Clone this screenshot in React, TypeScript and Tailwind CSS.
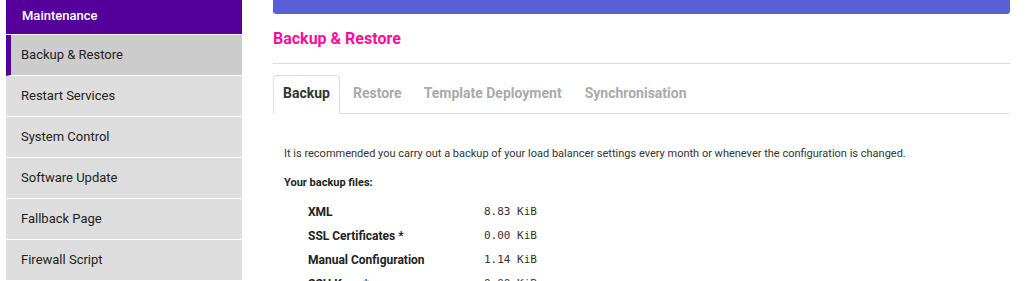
import React from "react";

const items = ["Backup & Restore", "Restart Services", "System Control", "Software Update", "Fallback Page", "Firewall Script"];

const files: [string, string][] = [
  ["XML", "8.83 KiB"],
  ["SSL Certificates *", "0.00 KiB"],
  ["Manual Configuration", "1.14 KiB"],
  ["SSH Keys *", "0.00 KiB"],
];

export default function App() {
  return (
    <div className="flex h-[281px] w-[1033px] overflow-hidden bg-white items-start" style={{ fontFamily: "Roboto, 'Liberation Sans', sans-serif" }}>
      <aside className="ml-[6px] w-[236px] shrink-0 flex flex-col">
        <div className="h-[35px] shrink-0 bg-[#55009b] text-white text-[13px] font-medium flex items-center pl-[16px] pb-[2px] border-b border-white">Maintenance</div>
        {items.map((it, i) => (
          <div
            key={it}
            className={
              "h-[41px] shrink-0 flex items-center text-[13px] text-[#222] border-b border-white " +
              (i === 0 ? "bg-[#cccccc] border-l-[5px] border-l-[#55009b] pl-[10px]" : "bg-[#dddddd] pl-[15px]")
            }
          >
            {it}
          </div>
        ))}
      </aside>
      <main className="ml-[31px] w-[737px] shrink-0 flex flex-col">
        <div className="h-[14px] shrink-0 bg-[#5b5fd6] rounded-b-[3px]" />
        <h1 className="mt-[15px] h-[20px] shrink-0 leading-[20px] text-[16px] font-bold text-[#ff0a9a]">Backup &amp; Restore</h1>
        <div className="mt-[14px] h-px shrink-0 bg-[#dcdcdc]" />
        <div className="mt-[11px] flex shrink-0 h-[39px] border-b border-[#dddddd] text-[14px] font-bold">
          <div className="h-[39px] px-[9px] pb-[2px] flex items-center border border-[#dddddd] border-b-white rounded-t-[4px] bg-white text-[#333] mb-[-1px]">Backup</div>
          <div className="h-[38px] pl-[13px] pr-[10px] pb-[2px] flex items-center text-[#aaaaaa]">Restore</div>
          <div className="h-[38px] px-[12px] pb-[2px] flex items-center text-[#aaaaaa]">Template Deployment</div>
          <div className="h-[38px] px-[11px] pb-[2px] flex items-center text-[#aaaaaa]">Synchronisation</div>
        </div>
        <div className="pl-[11px] shrink-0">
          <p className="mt-[32px] text-[11px] leading-[16px] text-[#333]">
            It is recommended you carry out a backup of your load balancer settings every month or whenever the configuration is changed.
          </p>
          <p className="mt-[13px] text-[11px] leading-[16px] font-bold text-[#222]">Your backup files:</p>
          <div className="mt-[9px] pl-[24px] flex flex-col">
            {files.map(([k, v]) => (
              <div key={k} className="flex h-[24px] shrink-0 items-center">
                <span className="w-[176px] text-[12px] font-bold text-[#222]">{k}</span>
                <span className="text-[11px] text-[#333]" style={{ fontFamily: "'DejaVu Sans Mono', monospace" }}>{v}</span>
              </div>
            ))}
          </div>
        </div>
      </main>
    </div>
  );
}
